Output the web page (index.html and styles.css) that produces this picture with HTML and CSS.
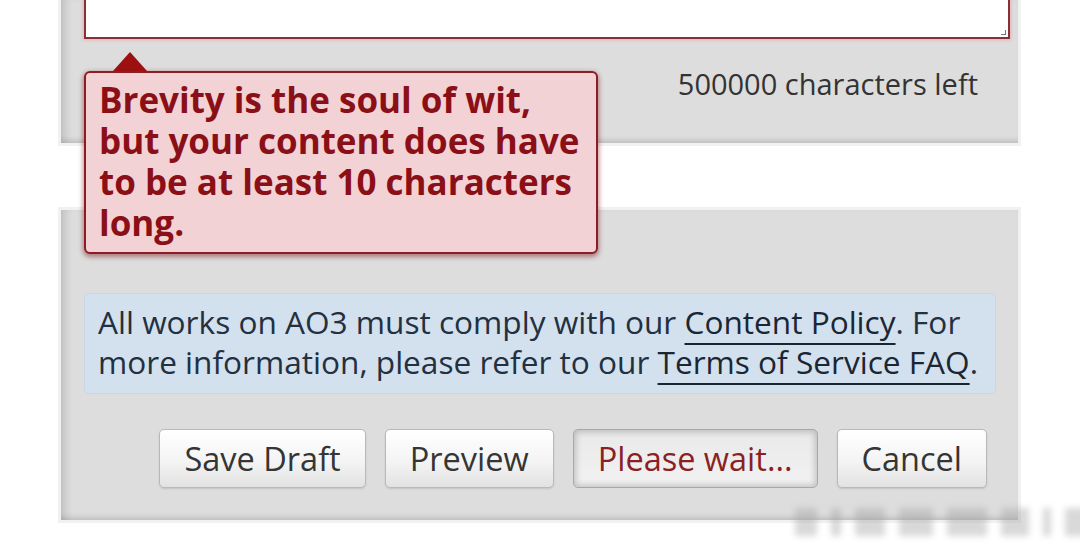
FILE: index.html
```html
<!DOCTYPE html>
<html lang="en">
<head>
<meta charset="utf-8">
<title>Post work</title>
<link rel="stylesheet" href="styles.css">
</head>
<body>
<div class="page">
  <section class="panel panel-top">
    <div class="textarea"><span class="grip"></span></div>
    <div class="counter">500000 characters left</div>
  </section>

  <section class="panel panel-bottom">
    <p class="notice">All works on AO3 must comply with our <a href="#">Content Policy</a>. For more information, please refer to our <a href="#">Terms of Service FAQ</a>.</p>
    <div class="actions">
      <button class="btn">Save Draft</button>
      <button class="btn">Preview</button>
      <button class="btn btn-wait">Please wait...</button>
      <button class="btn">Cancel</button>
    </div>
  </section>

  <div class="tooltip">
    <span class="tip-arrow"></span>
    Brevity is the soul of wit, but your content does have to be at least 10 characters long.
  </div>

  <div class="watermark">
    <i class="w1"></i><i class="w2"></i><i class="w3"></i><i class="w4"></i><i class="w5"></i><i class="w6"></i><i class="w7"></i><i class="w8"></i>
  </div>
</div>
</body>
</html>
```

FILE: styles.css
```css
* { box-sizing: border-box; }

html, body {
  margin: 0;
  padding: 0;
  background: #ffffff;
  height: 100%;
  overflow: hidden;
}

body {
  font-family: "Open Sans", "Liberation Sans", sans-serif;
  color: #2a2a2a;
}

.page {
  position: relative;
  width: 1080px;
  height: 549px;
}

.panel {
  margin-left: 58px;
  width: 963px;
  background: #dddddd;
  border: 3px solid #f1f1f1;
  box-shadow:
    inset 9px 0 8px -5px rgba(0, 0, 0, 0.14),
    inset 0 -6px 5px -3px rgba(0, 0, 0, 0.12);
}

.panel-top {
  border-top: 0;
  padding: 0 8px 0 23px;
}

.textarea {
  position: relative;
  height: 39px;
  background: #ffffff;
  border: 2px solid #8c2f33;
  border-top: 0;
  box-shadow: 0 0 3px 1px rgba(230, 150, 160, 0.6);
}

.grip {
  position: absolute;
  right: 2px;
  bottom: 2px;
  width: 5px;
  height: 5px;
  border-right: 1px solid #777;
  border-bottom: 1px solid #777;
}

.counter {
  text-align: right;
  padding: 27px 32px 41px 0;
  line-height: 36px;
  font-size: 29px;
  color: #333333;
}

.panel-bottom {
  margin-top: 61px;
  padding: 83px 22px 32px 23px;
}

.notice {
  margin: 0;
  padding: 8px 4px 11px 13px;
  background: #d3e0ee;
  border: 1px solid #c9d6e4;
  border-radius: 5px;
  font-size: 31.6px;
  line-height: 40px;
  color: #22303f;
}

.notice a {
  color: #1b2633;
  text-decoration: underline;
  text-decoration-thickness: 2px;
  text-underline-offset: 9px;
}

.actions {
  display: flex;
  justify-content: flex-end;
  gap: 19px;
  margin-top: 35px;
  margin-right: 9px;
}

.btn {
  height: 59px;
  padding: 0 24px;
  font-family: "Open Sans", "Liberation Sans", sans-serif;
  font-size: 32.5px;
  color: #353535;
  background: linear-gradient(#ffffff 0%, #f4f4f4 55%, #e2e2e2 100%);
  border: 1px solid #b9b9b9;
  border-radius: 5px;
  box-shadow: 0 1px 2px rgba(0, 0, 0, 0.12);
}

.btn-wait {
  color: #8a1f24;
  background: linear-gradient(#e9e9e9, #f2f2f2);
  border-color: #a8a8a8;
  box-shadow: inset 0 0 6px 2px rgba(0, 0, 0, 0.2);
}

.tooltip {
  position: absolute;
  left: 84px;
  top: 71px;
  width: 514px;
  height: 183px;
  padding: 6px 10px 0 13px;
  background: #f3d2d5;
  border: 2px solid #8b1d23;
  border-radius: 6px;
  box-shadow: 0 2px 5px 1px rgba(110, 0, 10, 0.45);
  font-size: 35px;
  font-weight: 700;
  line-height: 41px;
  color: #8b0f17;
}

.tip-arrow {
  position: absolute;
  left: 27px;
  top: -21px;
  width: 0;
  height: 0;
  border-left: 17px solid transparent;
  border-right: 17px solid transparent;
  border-bottom: 19px solid #9c1012;
}

.watermark {
  position: absolute;
  left: 795px;
  top: 508px;
  display: flex;
  gap: 14px;
  align-items: flex-end;
  filter: blur(3px);
  opacity: 0.4;
}

.watermark i {
  display: block;
  background: #a0a0a0;
  height: 28px;
}
.watermark .w1 { width: 22px; }
.watermark .w2 { width: 10px; }
.watermark .w3 { width: 30px; }
.watermark .w4 { width: 34px; }
.watermark .w5 { width: 40px; }
.watermark .w6 { width: 28px; }
.watermark .w7 { width: 8px; }
.watermark .w8 { width: 34px; }
```
